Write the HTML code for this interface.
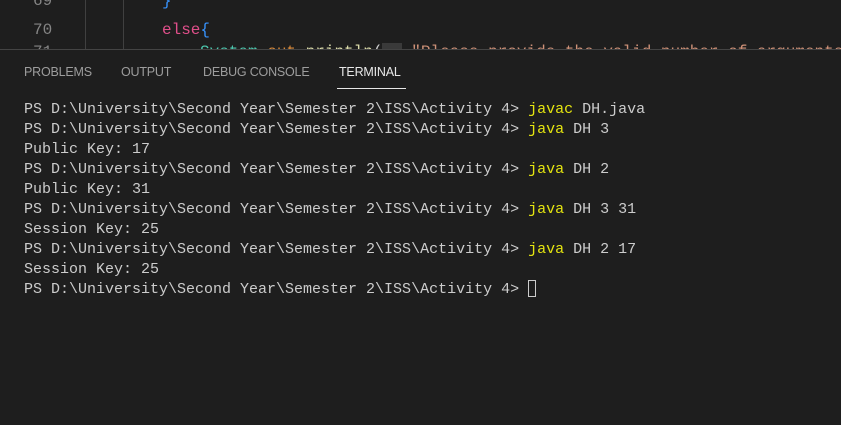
<!DOCTYPE html>
<html><head><meta charset="utf-8"><style>
html,body{margin:0;padding:0;background:#1e1e1e;width:841px;height:424px;overflow:hidden;}
.ed{position:absolute;left:0;top:0;width:841px;height:49px;overflow:hidden;background:#1e1e1e;font-family:"Liberation Mono",monospace;font-size:16px;}
.ln{position:absolute;left:33px;color:#858585;}
.vl{position:absolute;top:0;height:49px;width:1px;background:#404040;}
.code{position:absolute;left:162px;white-space:pre;}
.panel{position:absolute;left:0;top:49px;width:841px;height:375px;background:#1e1e1e;border-top:1px solid #444;}
.tab{position:absolute;top:15px;font-family:"Liberation Sans",sans-serif;font-size:12.5px;color:#9d9d9d;letter-spacing:-0.2px;}
.term{position:absolute;left:24px;top:50px;font-family:"Liberation Mono",monospace;font-size:15px;line-height:20px;color:#cccccc;white-space:pre;}
.y{color:#e5e510;}
.cur{display:inline-block;width:8px;height:17px;border:1px solid #cccccc;vertical-align:-4px;box-sizing:border-box;}
</style></head><body>
<div class="ed">
<div class="ln" style="top:-8px">69</div>
<div class="ln" style="top:21px">70</div>
<div class="ln" style="top:43px">71</div>
<div class="vl" style="left:85px"></div>
<div class="vl" style="left:123px"></div>
<div class="code" style="top:-8px;color:#3794ff">}</div>
<div class="code" style="top:21px"><span style="color:#e04f8a">else</span><span style="color:#3794ff">{</span></div>
<div class="code" style="top:43px;left:200px"><span style="color:#4ec9b0">System</span><span style="color:#ccc">.</span><span style="color:#d98a3a">out</span><span style="color:#ccc">.</span><span style="color:#dcdcaa">println</span><span style="color:#ccc">(</span><span style="background:#3a3a3a;color:#888">··</span> <span style="color:#ce9178">"Please provide the valid number of arguments</span></div>
</div>
<div class="panel">
<div class="tab" style="left:24px">PROBLEMS</div>
<div class="tab" style="left:121px">OUTPUT</div>
<div class="tab" style="left:203px">DEBUG CONSOLE</div>
<div class="tab" style="left:339px;color:#e7e7e7">TERMINAL</div>
<div style="position:absolute;left:337px;top:38px;width:69px;height:1px;background:#e7e7e7"></div>
<div class="term">PS D:\University\Second Year\Semester 2\ISS\Activity 4&gt; <span class="y">javac</span> DH.java
PS D:\University\Second Year\Semester 2\ISS\Activity 4&gt; <span class="y">java</span> DH 3
Public Key: 17
PS D:\University\Second Year\Semester 2\ISS\Activity 4&gt; <span class="y">java</span> DH 2
Public Key: 31
PS D:\University\Second Year\Semester 2\ISS\Activity 4&gt; <span class="y">java</span> DH 3 31
Session Key: 25
PS D:\University\Second Year\Semester 2\ISS\Activity 4&gt; <span class="y">java</span> DH 2 17
Session Key: 25
PS D:\University\Second Year\Semester 2\ISS\Activity 4&gt; <span class="cur"></span></div>
</div>
</body></html>
